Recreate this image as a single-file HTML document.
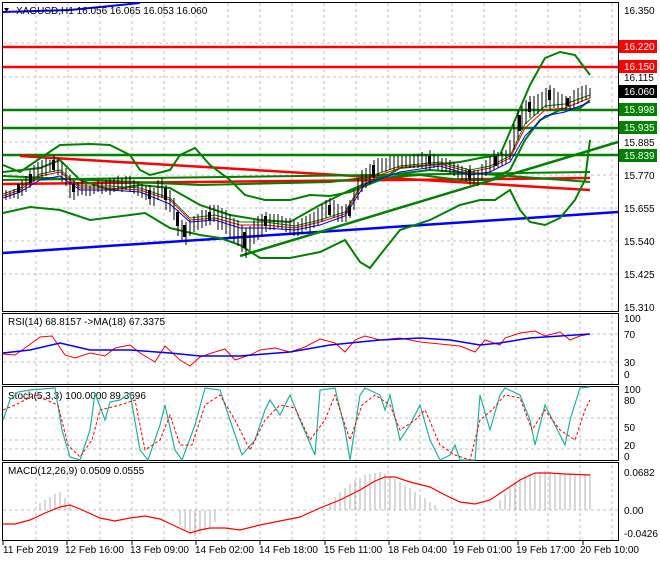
<!DOCTYPE html>
<html><head><meta charset="utf-8"><style>
body{margin:0;background:#fff;width:660px;height:560px;overflow:hidden;font-family:"Liberation Sans",sans-serif}
svg text{font-family:"Liberation Sans",sans-serif;font-size:10px;fill:#000}
</style></head><body>
<svg width="660" height="560" viewBox="0 0 660 560" xmlns="http://www.w3.org/2000/svg">
<rect width="660" height="560" fill="#fff"/>
<g stroke="#c0c0c0" stroke-dasharray="3,3" stroke-width="1">
<path d="M36 3V540M68 3V540M100 3V540M132 3V540M164 3V540M196 3V540M228 3V540M260 3V540M292 3V540M324 3V540M356 3V540M388 3V540M420 3V540M452 3V540M484 3V540M516 3V540M548 3V540M580 3V540M612 3V540"/>
<path d="M3 43H618M3 77H618M3 110H618M3 142H618M3 175H618M3 208H618M3 241H618M3 274H618"/>
<path d="M3 334H618M3 362H618M3 418H618M3 440H618M3 449H618M3 510H618"/>
</g>
<g fill="none" stroke="#000" stroke-width="1">
<rect x="2.5" y="2.5" width="616" height="309"/>
<rect x="2.5" y="313.5" width="616" height="71"/>
<rect x="2.5" y="386.5" width="616" height="74"/>
<rect x="2.5" y="462.5" width="616" height="78"/>
</g>
<g stroke-width="2.5">
<path d="M3 47H618M3 67H618" stroke="#f00"/>
<path d="M3 110H618M3 128H618M3 155H618" stroke="#008000"/>
</g>
<path d="M3 253L618 212" stroke="#00f" stroke-width="2.5"/>
<path d="M20 156L590 190" stroke="#f00" stroke-width="2.5"/>
<path d="M3 184L590 178" stroke="#f00" stroke-width="2.5"/>
<path d="M240 256L618 142" stroke="#008000" stroke-width="2.5"/>
<path d="M3 180L590 172" stroke="#008000" stroke-width="2"/>
<path d="M3 176L200 185L330 182L430 170L590 182" stroke="#008000" stroke-width="2" fill="none"/>
<g fill="none" stroke="#008000" stroke-width="2">
<path d="M3 165L20 172L45 155L60 145L90 144L110 145L130 155L140 170L150 175L170 170L180 155L195 148L210 165L230 180L245 195L265 200L290 200L310 195L330 196L350 192L360 188L380 180L400 168L430 165L460 162L480 158L500 155L515 120L530 85L545 58L560 52L575 55L590 75"/>
<path d="M3 213L30 207L60 210L90 220L130 215L145 213L170 228L200 235L220 238L240 245L260 258L290 258L320 252L345 240L360 262L370 268L380 255L400 230L430 220L460 205L480 200L495 200L510 190L520 210L530 222L545 225L560 218L575 200L585 180L590 140"/>
<path d="M3 172L40 168L60 160L80 180L110 190L140 185L170 188L200 205L230 215L260 220L290 222L320 205L350 190L380 178L420 175L460 180L490 180L510 170L525 140L540 120L560 110L580 108L590 100"/>
</g>
<g fill="none" stroke-width="1">
<path d="M3 196L20 190L40 176L60 172L80 188L110 188L140 190L170 200L190 220L215 218L240 225L265 225L295 228L320 222L345 214L365 180L400 168L440 164L470 172L490 168L510 158L525 128L545 110L565 108L590 98" stroke="#f00"/>
<path d="M3 198L20 192L40 180L60 176L80 190L110 190L140 192L170 204L190 222L215 220L240 228L265 228L295 230L320 225L345 216L365 184L400 172L440 166L470 175L490 172L510 162L525 136L545 116L565 112L590 102" stroke="#00f"/>
<path d="M3 194L20 188L40 174L60 170L80 186L110 186L140 188L170 198L190 218L215 215L240 222L265 222L295 226L320 220L345 212L365 178L400 166L440 162L470 170L490 166L510 156L525 124L545 106L565 104L590 95" stroke="#008000"/>
</g>
<g stroke="#000" stroke-width="1">
<path d="M6 190V200M10 191V199M14 189V198M18 184V199M22 180V196M26 176V192M30 170V188M34 165V182M38 162V178M42 160V178M46 158V176M50 160V172M54 155V172M58 158V175M62 162V182M66 168V186M70 175V198M74 180V200M78 182V196M82 180V195M86 184V196M90 186V196M94 184V194M98 180V192M102 182V194M106 180V192M110 178V195M114 178V192M118 176V190M122 178V192M126 176V190M130 176V192M134 180V194M138 182V196M142 184V198M146 186V200M150 185V205M154 188V206M158 180V200M162 178V198M166 185V210M170 190V212M174 198V220M178 210V236M182 220V240M186 222V245M190 220V236M194 216V232M198 214V230M202 210V228M206 210V226M210 205V225M214 205V222M218 205V230M222 208V230M226 210V234M230 214V238M234 218V242M238 220V246M242 225V252M246 228V258M250 226V250M254 220V244M258 216V240M262 214V236M266 212V232M270 214V230M274 214V230M278 214V228M282 216V230M286 218V232M290 218V234M294 220V236M298 222V236M302 218V234M306 216V230M310 214V232M314 212V228M318 208V226M322 204V222M326 200V218M330 198V216M334 200V218M338 204V222M342 206V222M346 204V222M350 200V218M354 190V210M358 178V200M362 170V192M366 168V188M370 164V184M374 160V180M378 158V176M382 158V172M386 158V172M390 156V170M394 156V170M398 156V168M402 156V168M406 156V168M410 156V168M414 154V168M418 154V168M422 152V168M426 154V170M430 150V170M434 154V168M438 156V170M442 158V172M446 158V172M450 160V174M454 162V176M458 164V178M462 166V180M466 168V182M470 165V185M474 170V184M478 170V186M482 164V180M486 160V176M490 156V172M494 150V170M498 152V168M502 152V166M506 150V164M510 140V160M514 124V150M518 110V140M522 106V130M526 100V124M530 96V118M534 96V116M538 94V114M542 92V110M546 88V108M550 85V110M554 88V108M558 92V108M562 94V110M566 96V110M570 96V110M574 90V108M578 88V104M582 86V102M586 85V100M590 88V98"/>
</g>
<g fill="#000">
<rect x="17" y="184" width="3" height="9"/><rect x="29" y="174" width="3" height="9"/><rect x="52" y="160" width="3" height="10"/><rect x="72" y="184" width="3" height="8"/><rect x="148" y="190" width="3" height="9"/><rect x="164" y="188" width="3" height="12"/><rect x="176" y="212" width="3" height="14"/><rect x="183" y="225" width="3" height="12"/><rect x="208" y="212" width="3" height="8"/><rect x="243" y="232" width="3" height="16"/><rect x="264" y="216" width="3" height="10"/><rect x="328" y="205" width="3" height="10"/><rect x="348" y="206" width="3" height="10"/><rect x="372" y="165" width="3" height="12"/><rect x="428" y="156" width="3" height="8"/><rect x="468" y="170" width="3" height="10"/><rect x="494" y="156" width="3" height="10"/><rect x="518" y="115" width="3" height="16"/><rect x="528" y="102" width="3" height="10"/><rect x="548" y="90" width="3" height="10"/><rect x="566" y="98" width="3" height="8"/>
</g>
<path d="M4 8L9 8L6.5 12Z" fill="#000"/>
<path d="M3 12L70 10L140 3" stroke="#00f" stroke-width="2" fill="none"/>
<text x="16" y="14">XAGUSD,H1  16.056 16.065 16.053 16.060</text>
<g>
<text x="624" y="14">16.350</text>
<text x="624" y="81">16.115</text>
<text x="624" y="146">15.885</text>
<text x="624" y="179">15.770</text>
<text x="624" y="212">15.655</text>
<text x="624" y="245">15.540</text>
<text x="624" y="278">15.425</text>
<text x="624" y="311">15.310</text>
<rect x="619" y="40" width="38" height="13" fill="#f00"/><text x="624" y="50" style="fill:#fff">16.220</text>
<rect x="619" y="60" width="38" height="13" fill="#f00"/><text x="624" y="70" style="fill:#fff">16.150</text>
<rect x="619" y="85" width="38" height="13" fill="#000"/><text x="624" y="95" style="fill:#fff">16.060</text>
<rect x="619" y="103" width="38" height="13" fill="#008000"/><text x="624" y="113" style="fill:#fff">15.998</text>
<rect x="619" y="121" width="38" height="13" fill="#008000"/><text x="624" y="131" style="fill:#fff">15.935</text>
<rect x="619" y="149" width="38" height="13" fill="#008000"/><text x="624" y="159" style="fill:#fff">15.839</text>
</g>
<text x="8" y="325">RSI(14) 68.8157  -&gt;MA(18) 67.3375</text>
<text x="624" y="322">100</text><text x="624" y="338">70</text><text x="624" y="366">30</text><text x="624" y="378">0</text>
<path d="M3 354L15 355L25 348L40 337L52 336L65 355L75 358L90 353L105 356L115 348L130 345L140 353L155 362L165 346L180 360L190 366L200 357L215 352L225 349L235 360L250 355L260 350L275 348L290 352L305 347L320 339L335 343L345 352L355 340L365 336L380 340L400 338L420 342L440 344L460 346L475 352L485 340L500 345L505 338L520 333L535 331L545 336L560 332L570 340L580 336L590 334" fill="none" stroke="#f00" stroke-width="1"/>
<path d="M3 353L30 350L60 343L90 350L130 350L170 353L200 356L240 356L290 352L330 345L380 340L420 338L450 340L480 345L500 343L530 338L560 336L590 334" fill="none" stroke="#00f" stroke-width="1.5"/>
<text x="8" y="399">Stoch(5,3,3) 100.0000 89.3696</text>
<text x="624" y="393">100</text><text x="624" y="404">80</text><text x="624" y="431">50</text><text x="624" y="449">20</text><text x="624" y="460">0</text>
<path d="M3 420L10 400L18 392L30 390L55 388L62 430L70 457L80 460L90 430L95 393L105 420L110 402L120 400L130 393L140 450L148 460L160 425L165 405L175 450L182 460L195 425L205 388L220 390L230 420L242 455L255 440L265 410L270 400L280 415L290 395L300 420L315 455L320 390L335 388L345 430L350 460L360 395L365 388L380 395L385 410L390 395L400 440L410 425L420 405L430 440L440 460L450 455L455 445L460 460L475 460L480 395L490 430L500 395L505 388L520 395L530 420L535 445L545 405L555 425L565 445L570 420L580 388L590 387" fill="none" stroke="#20b0a0" stroke-width="1.2"/>
<path d="M3 410L15 405L35 395L58 405L68 445L80 457L92 440L100 410L120 405L135 400L145 450L160 440L170 415L180 445L192 445L205 405L220 395L235 420L250 450L265 420L280 405L295 408L310 440L325 420L335 395L350 440L362 405L375 395L390 405L400 430L415 420L425 410L440 445L455 455L470 460L480 420L492 410L505 395L520 398L532 430L545 410L560 430L575 440L585 410L590 400" fill="none" stroke="#f00" stroke-width="1" stroke-dasharray="3,2"/>
<text x="8" y="474">MACD(12,26,9) 0.0509 0.0555</text>
<text x="624" y="476">0.0682</text><text x="624" y="514">0.00</text><text x="624" y="537">-0.0426</text>
<g stroke="#b0b0b0" stroke-width="1">
<path d="M40 510V503M45 510V500M50 510V497M55 510V494M60 510V492M65 510V498M70 510V504M180 510V525M185 510V530M190 510V534M195 510V536M200 510V534M205 510V530M210 510V527M215 510V522M330 510V502M335 510V497M340 510V492M345 510V488M350 510V484M355 510V480M360 510V478M365 510V475M370 510V474M375 510V473M380 510V472M385 510V474M390 510V476M395 510V479M400 510V482M405 510V485M410 510V488M415 510V492M420 510V495M425 510V498M430 510V502M435 510V505M500 510V500M505 510V494M510 510V488M515 510V482M520 510V478M525 510V475M530 510V474M535 510V473M540 510V472M545 510V471M550 510V472M555 510V473M560 510V474M565 510V474M570 510V474M575 510V474M580 510V474M585 510V474M590 510V474"/>
</g>
<path d="M3 524L15 524L30 520L45 513L60 507L70 505L80 509L100 518L115 521L130 518L145 516L160 519L175 526L190 533L200 530L210 528L225 528L240 530L260 525L280 521L300 517L320 508L340 500L360 490L375 481L385 477L395 477L410 482L430 487L445 495L460 502L475 504L490 500L505 490L520 480L535 473L550 473L565 474L590 475" fill="none" stroke="#f00" stroke-width="1.2"/>
<g stroke="#000"><path d="M3 541V545M67 541V545M132 541V545M196 541V545M260 541V545M325 541V545M389 541V545M454 541V545M518 541V545M583 541V545"/></g>
<text x="3" y="553">11 Feb 2019</text>
<text x="65" y="553">12 Feb 16:00</text>
<text x="130" y="553">13 Feb 09:00</text>
<text x="195" y="553">14 Feb 02:00</text>
<text x="259" y="553">14 Feb 18:00</text>
<text x="324" y="553">15 Feb 11:00</text>
<text x="388" y="553">18 Feb 04:00</text>
<text x="453" y="553">19 Feb 01:00</text>
<text x="516" y="553">19 Feb 17:00</text>
<text x="580" y="553">20 Feb 10:00</text>
</svg>
</body></html>
